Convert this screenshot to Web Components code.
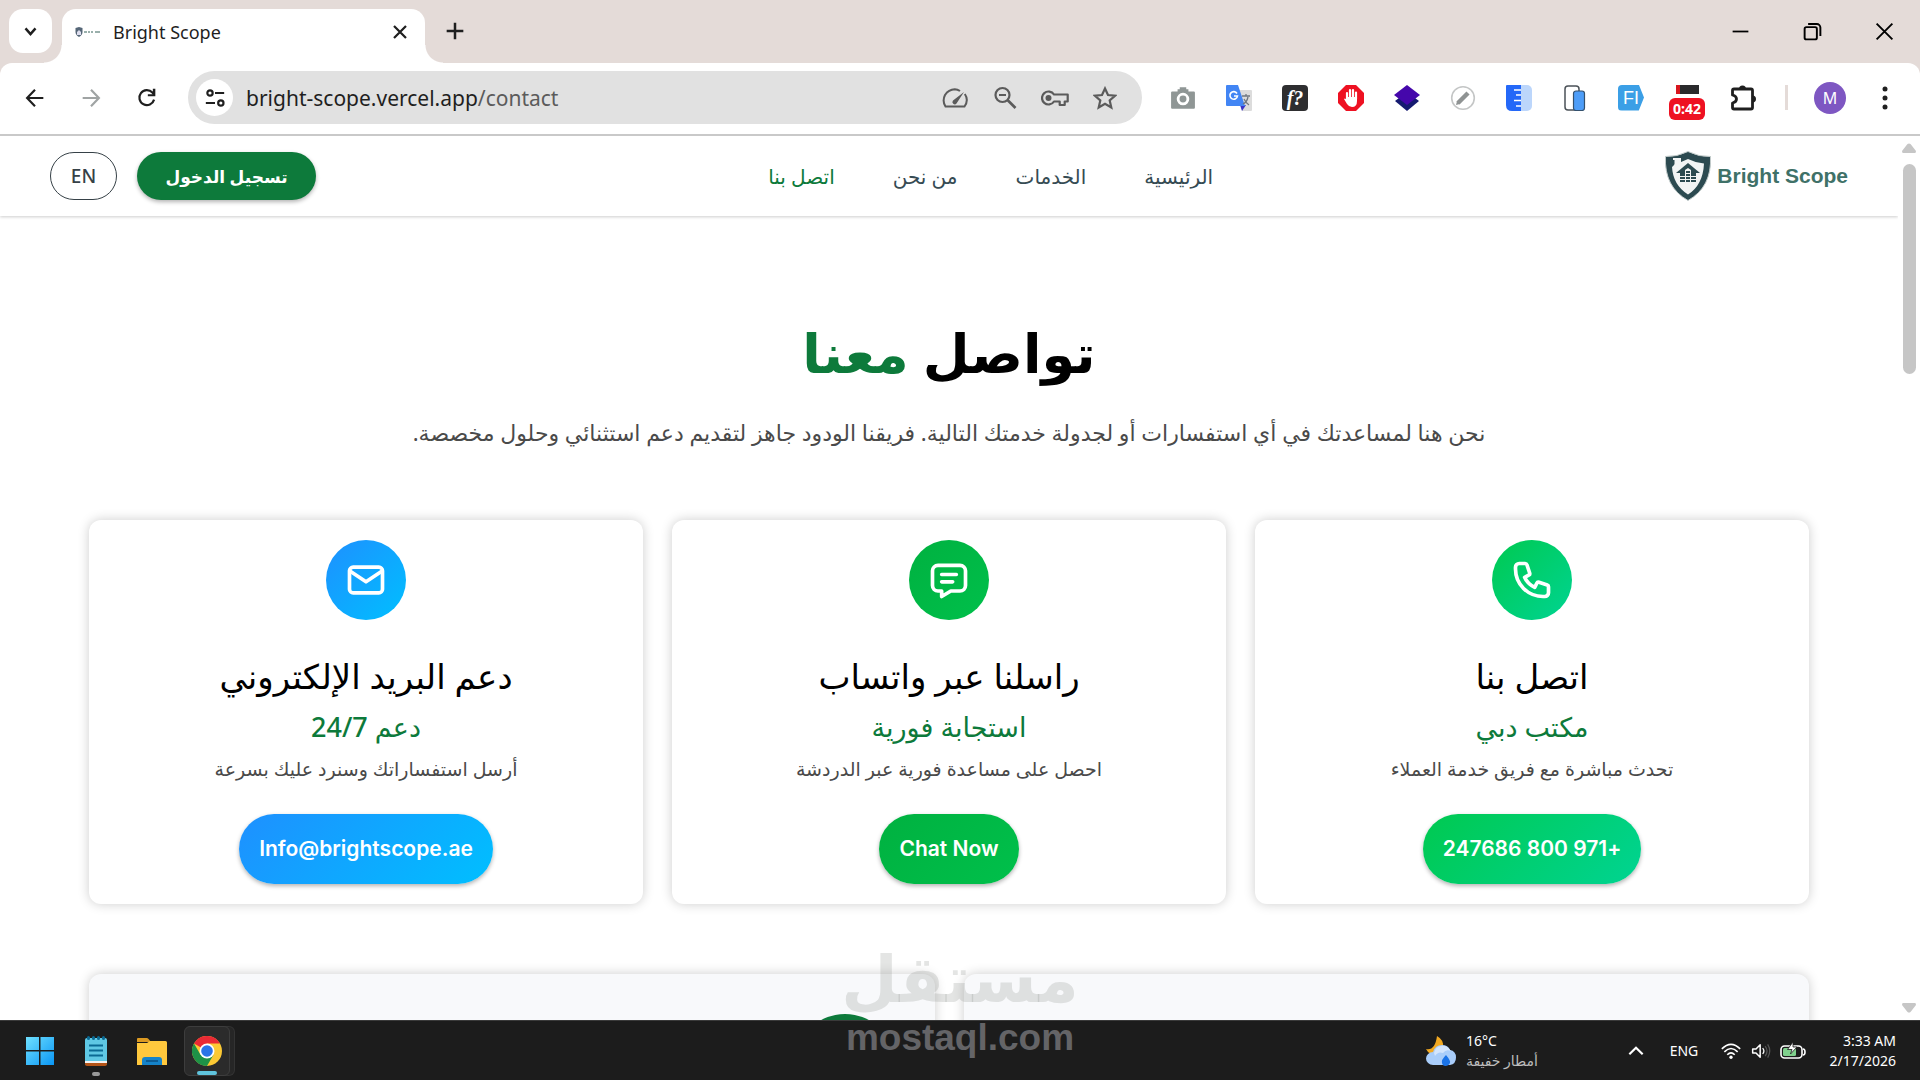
<!DOCTYPE html>
<html lang="ar">
<head>
<meta charset="utf-8">
<title>Bright Scope</title>
<style>
    html, body { height: 100%; margin: 0; }
    body {
        display: flex;
        flex-direction: column;
        overflow: hidden;
        background: #fff;
        font-family: "Noto Sans", "DejaVu Sans", sans-serif;
    }
</style>
</head>
<body>
    <tab-strip title="Bright Scope"></tab-strip>
    <browser-toolbar host="bright-scope.vercel.app" path="/contact"></browser-toolbar>
    <page-view>
        <site-header></site-header>
        <contact-hero>
            <span slot="title">تواصل</span>
            <span slot="accent">معنا</span>
            نحن هنا لمساعدتك في أي استفسارات أو لجدولة خدمتك التالية. فريقنا الودود جاهز لتقديم دعم استثنائي وحلول مخصصة.
        </contact-hero>
        <card-grid>
            <contact-card icon="phone" href="tel:+971800247686" style="--from: #00c950; --to: #00d492">
                <span slot="title">اتصل بنا</span>
                <span slot="subtitle">مكتب دبي</span>
                <span slot="text">تحدث مباشرة مع فريق خدمة العملاء</span>
                +971 800 247686
            </contact-card>
            <contact-card icon="chat" href="#chat" style="--from: #00b140; --to: #00c04b">
                <span slot="title">راسلنا عبر واتساب</span>
                <span slot="subtitle">استجابة فورية</span>
                <span slot="text">احصل على مساعدة فورية عبر الدردشة</span>
                Chat Now
            </contact-card>
            <contact-card icon="mail" href="mailto:Info@brightscope.ae" style="--from: #1e90ff; --to: #00bfff">
                <span slot="title">دعم البريد الإلكتروني</span>
                <span slot="subtitle">دعم 24/7</span>
                <span slot="text">أرسل استفساراتك وسنرد عليك بسرعة</span>
                Info@brightscope.ae
            </contact-card>
        </card-grid>
        <info-panels></info-panels>
    </page-view>
    <task-bar></task-bar>
    <water-mark></water-mark>

<script>
    // Every icon as [viewBox, markup]
    const ICONS = {
        chevronDown: ['0 0 24 24', '<path d="M4 7l8 9 8-9" fill="none" stroke="currentColor" stroke-width="4"/>'],
        favicon: ['0 0 26 12', '<path d="M4 1l3.500 1v4q0 3-3.500 5Q.5 9 .5 6V2z" fill="#567"/><path d="M2 6l2-2 2 2v3H2z" fill="#dde"/><path d="M9 6h3M13 6h2M16 6h2M20 6h5" stroke="#9ab0ac" stroke-width="2"/>'],
        cross: ['0 0 24 24', '<path d="M4 4l16 16M20 4L4 20" fill="none" stroke="currentColor" stroke-width="3"/>'],
        crossThin: ['0 0 24 24', '<path d="M3 3l18 18M21 3L3 21" fill="none" stroke="currentColor" stroke-width="2.200"/>'],
        plus: ['0 0 24 24', '<path d="M12 2v20M2 12h20" fill="none" stroke="currentColor" stroke-width="3"/>'],
        minimize: ['0 0 24 24', '<path d="M3 12h18" stroke="currentColor" stroke-width="2"/>'],
        restore: ['0 0 24 24', '<g fill="none" stroke="currentColor" stroke-width="2.200"><rect x="3" y="7" width="14" height="14" rx="2"/><path d="M7 3.500h10a4 4 0 0 1 4 4V17"/></g>'],
        back: ['0 0 24 24', '<path d="M22 12H3M12 2L2.500 12l9.500 10" fill="none" stroke="currentColor" stroke-width="2.600"/>'],
        forward: ['0 0 24 24', '<path d="M2 12h19M12 2l9.500 10-9.500 10" fill="none" stroke="currentColor" stroke-width="2.600"/>'],
        reload: ['0 0 24 24', '<path d="M20.500 14A9 9 0 1 1 18.500 5.500l2 2.500" fill="none" stroke="currentColor" stroke-width="2.600"/><path d="M22 1v9h-9V7.500h6V1z" fill="currentColor"/>'],
        tune: ['0 0 24 24', '<g fill="none" stroke="currentColor" stroke-width="2.600"><circle cx="6" cy="6" r="3.200"/><path d="M12 6h11M1 18h11"/><circle cx="19" cy="18" r="3.200"/></g>'],
        speed: ['0 0 26 20', '<path d="M18 3Q15.500 1.300 12.800 1.300 6.500 1.500 3 7 0 13 3.500 18.500h19Q27 12 22.800 6" fill="none" stroke="currentColor" stroke-width="2"/><path d="M22 4L11 12.500a2.300 2.300 0 0 0 3.500 3z" fill="currentColor"/>'],
        zoomOut: ['0 0 24 24', '<g fill="none" stroke="currentColor"><circle cx="9.500" cy="9" r="7" stroke-width="2.200"/><path d="M6 9h7" stroke-width="2"/><path d="M14.500 14l8 8" stroke-width="2.600"/></g>'],
        key: ['0 0 28 18', '<path d="M13 5.500h13.700v7h-3V16h-5v-3.500H13A6.500 6.500 0 1 1 13 5.500z" fill="none" stroke="currentColor" stroke-width="2.200" stroke-linejoin="round"/><circle cx="7.500" cy="9" r="3" fill="currentColor"/>'],
        star: ['0 0 24 24', '<path d="M12 2.500l3 6.500 7 .7-5.300 4.700 1.600 7.100L12 17.700l-6.300 3.800 1.600-7.100L2 9.700 9 9z" fill="none" stroke="currentColor" stroke-width="2.200"/>'],
        camera: ['0 0 24 24', '<path d="M2 6h5V4h2V2h6v2h2v2h5q1 0 1 1v14q0 1-1 1H2q-1 0-1-1V7q0-1 1-1z" fill="#8f9695"/><circle cx="12" cy="13" r="4.500" fill="none" stroke="#fff" stroke-width="2.600"/>'],
        translate: ['0 0 26 26', '<path d="M11 5h14q1 0 1 1v19q0 1-1 1h-9z" fill="#dcdcdc"/><path d="M14 20l6 0-4 6z" fill="#3a36c8"/><path d="M1 0h11l7 21H1q-1 0-1-1V1q0-1 1-1z" fill="#4285f4"/><path d="M11 8.500A3.800 3.800 0 1 0 11.500 11H8" fill="none" stroke="#fff" stroke-width="1.600"/><path d="M16 11h8M20 9v2M22 12q-1 5-5 7M18 14q2 4 5 6" fill="none" stroke="#6f7780" stroke-width="1.300"/>'],
        ruler: ['0 0 26 26', '<rect x="8" width="18" height="26" rx="5" fill="#bcd6fb"/><path d="M1 0h14v26H6q-6 0-6-6V1q0-1 1-1z" fill="#2468f8"/><path d="M8 5h7M10 10h5M8 15.500h7M10 21h5" stroke="#fff" stroke-width="1.600"/>'],
        hand: ['0 0 26 26', '<path d="M8 0h10l8 8v10l-8 8H8l-8-8V8z" fill="#ee1122"/><path d="M9 15V8M12 13V5M15 13V5M18 14V7.500" stroke="#fff" stroke-width="2.200" stroke-linecap="round"/><path d="M8 12h11v4q0 6-5 6-3 0-5-3l-3-5q1-1.500 3 1z" fill="#fff"/>'],
        stack: ['0 0 26 26', '<path d="M1 16l12-9 12 9-12 10z" fill="#151a70"/><path d="M13 0l13 10-13 10L0 10z" fill="#4507ab"/>'],
        pencilRound: ['0 0 26 26', '<circle cx="13" cy="13" r="11.300" fill="#fff" stroke="#c4c6c6" stroke-width="1.600"/><path d="M8 18l10-10" stroke="#8f9393" stroke-width="4.500"/><path d="M7 16l3 3-4 1z" fill="#8f9393"/>'],
        devices: ['0 0 26 26', '<rect x="3" y="1" width="14" height="24" rx="3" fill="#fff" stroke="#4b5258" stroke-width="1.500"/><rect x="11.500" y="6" width="11" height="19.500" rx="2.500" fill="#4d9df8" stroke="#34516e" stroke-width="1.200"/>'],
        puzzle: ['0 0 26 26', '<path d="M2.500 5.500Q2.500 4 4 4h17q1.500 0 1.500 1.500v17q0 1.500-1.500 1.500H4q-1.500 0-1.500-1.500V18q4-1 4-4t-4-4z" fill="none" stroke="currentColor" stroke-width="2.800" stroke-linejoin="round"/><path d="M9 4a3.500 3.500 0 0 1 7 0zM22.500 10.500a3.500 3.500 0 0 1 0 7z" fill="currentColor"/>'],
        dots: ['0 0 24 24', '<g fill="currentColor"><circle cx="12" cy="3" r="2.500"/><circle cx="12" cy="12" r="2.500"/><circle cx="12" cy="21" r="2.500"/></g>'],
        shield: ['0 0 46 50', '<path d="M23 .5Q34 6 45.500 5.500 47 36 23 49.500-1 36 .5 5.500 12 6 23 .5z" fill="#2c4a50" stroke="#c3cccb"/><path d="M23 8Q31 12 39 12.500 38 34 23 43.500 8 34 7 16L10 13V7h6v4z" fill="#f2f4f4"/><path d="M8 7h8v2h-1.500v5h-5V9H8z" fill="#f2f4f4"/><path d="M23 12l12 10H11z" fill="#2c4a50"/><path d="M15 22h16v9H15z" fill="#2c4a50"/><path d="M20 22v-3l3-2 3 2v12h-6z" fill="#f2f4f4"/><path d="M21 20h4v2h-4zM21 23h4v2h-4zM21 26h4v5h-4z" fill="#2c4a50"/><path d="M14 25.500h17M14 28.500h17" stroke="#f2f4f4"/>'],
        phone: ['0 0 24 24', '<path d="M3 5a2 2 0 0 1 2-2h3.280a1 1 0 0 1 .948.684l1.498 4.493a1 1 0 0 1-.502 1.210l-2.257 1.130a11.042 11.042 0 0 0 5.516 5.516l1.130-2.257a1 1 0 0 1 1.210-.502l4.493 1.498a1 1 0 0 1 .684.949V19a2 2 0 0 1-2 2h-1C9.716 21 3 14.284 3 6V5z" fill="none" stroke="currentColor" stroke-width="2" stroke-linejoin="round"/>'],
        chat: ['0 0 24 24', '<path d="M8 9h8M8 13h6" fill="none" stroke="currentColor" stroke-width="2" stroke-linecap="round"/><path d="M18 4a3 3 0 0 1 3 3v8a3 3 0 0 1-3 3h-5l-5 3v-3H6a3 3 0 0 1-3-3V7a3 3 0 0 1 3-3z" fill="none" stroke="currentColor" stroke-width="2" stroke-linejoin="round"/>'],
        mail: ['0 0 24 24', '<g fill="none" stroke="currentColor" stroke-width="2" stroke-linejoin="round"><rect x="3" y="5" width="18" height="14" rx="2"/><path d="M3 7l9 6 9-6"/></g>'],
        arrowUp: ['0 0 14 10', '<path d="M5.500 1q1.500-1 3 0L14 8q0 2-1 2H1Q0 10 0 8z" fill="#c6c6c6"/>'],
        arrowDown: ['0 0 14 10', '<path d="M5.500 9q1.500 1 3 0L14 2q0-2-1-2H1Q0 0 0 2z" fill="#c6c6c6"/>'],
        windows: ['0 0 30 30', '<defs><linearGradient id="w" x2="1" y2="1"><stop stop-color="#6fe0ff"/><stop offset="1" stop-color="#0a96f5"/></linearGradient></defs><path d="M1 1h13v13H1zM15.500 1H29v13H15.500zM1 15.500h13V29H1zM15.500 15.500H29V29H15.500z" fill="url(#w)"/>'],
        notepad: ['0 0 30 30', '<rect x="4" y="2" width="22" height="27" rx="2" fill="#5fc8e4"/><path d="M4 25h22v2H4z" fill="#f2f2f2"/><path d="M4 27h22v1q0 2-2 2H6q-2 0-2-2z" fill="#b35418"/><path d="M8 9.500h14M8 14.500h14M8 19.500h14" stroke="#0b6a94" stroke-width="2"/><path d="M7.500 1.500v1M12.500 1.500v1M17.500 1.500v1M22.500 1.500v1" stroke="#0b6a94" stroke-width="3" stroke-linecap="round"/>'],
        folder: ['0 0 30 30', '<path d="M1 2h9q1 0 2 1.500L14 6H0V3q0-1 1-1z" fill="#dc9a22"/><path d="M0 7h10l3-2h15.500Q30 5 30 6.500V29H0z" fill="#ffc83d"/><path d="M5 29v-5q0-3 3-3h14q3 0 3 3v5z" fill="#1583c9"/><path d="M9 25h12" stroke="#0a4f83" stroke-width="1.500"/>'],
        chrome: ['0 0 30 30', '<circle cx="15" cy="15" r="15" fill="#fcc934"/><path d="M15 15L2 7.500A15 15 0 0 1 28 7.500H15z" fill="#ea2a35"/><path d="M2 7.500A15 15 0 0 0 15 30l6.500-11.200L15 15 8.500 18.700z" fill="#1e9247"/><circle cx="15" cy="15" r="7.500" fill="#fff"/><circle cx="15" cy="15" r="5.800" fill="#2b74e8"/>'],
        weather: ['0 0 30 30', '<path d="M11 0q7 4 6 11t-7 8Q3 19 0 13q9 2 11-13z" fill="#f2a922"/><path d="M7 29a7 6.500 0 0 1 0-13Q9 9 16 9q6 0 8 5 6 1 6 7.500T24 29z" fill="#a9cdfa"/><path d="M9 20q3-5 8-3 3-4 8-2-4-6-10-5-6 1-7 7z" fill="#d3e5fd"/><path d="M20 19q5 6 4 8-1.500 3-4.500 3T16 27q-1-3 4-8z" fill="#1a73e8"/>'],
        chevronUp: ['0 0 24 24', '<path d="M4 16l8-8 8 8" fill="none" stroke="currentColor" stroke-width="2.600"/>'],
        wifi: ['0 0 24 24', '<g fill="none" stroke="currentColor" stroke-width="1.900"><path d="M1 9.500q11-11 22 0M4 13q8-8 16 0M7.500 16.500q4.500-4.500 9 0"/></g><circle cx="12" cy="19.500" r="2" fill="currentColor"/>'],
        sound: ['0 0 24 24', '<path d="M2 9.500h4l5-5v15l-5-5H2z" fill="none" stroke="currentColor" stroke-width="1.800" stroke-linejoin="round"/><path d="M14 8.500q3 3.500 0 7" fill="none" stroke="currentColor" stroke-width="1.500"/><path d="M17 6q4.500 6 0 12M20 4q5 8 0 16" fill="none" stroke="#555" stroke-width="1.500"/>'],
        battery: ['0 0 26 18', '<rect x="1" y="4" width="21" height="12" rx="3.500" fill="#1c1c1c" stroke="currentColor" stroke-width="1.600"/><rect x="3" y="6" width="13" height="8" rx="1.500" fill="#7fd08c"/><path d="M23 7q2 0 2 3t-2 3" fill="none" stroke="currentColor" stroke-width="1.600"/><path d="M13 0L7.500 7.500H12L10.500 12 17 5h-4z" fill="#fff" stroke="#1c1c1c" stroke-width=".8"/>']
    };

    class BaseElement extends HTMLElement {
        constructor() {
            super();
            this.attachShadow({mode: 'open'});
        }

        connectedCallback() {
            const template = document.createElement('template');
            template.innerHTML = `<style>:host, * { box-sizing: border-box; } button { padding: 0; border: 0; background: none; color: inherit; font: inherit; } a { text-decoration: none; }</style>${this.view}`;
            this.shadowRoot.replaceChildren(template.content.cloneNode(true));
        }
    }

    class UiIcon extends BaseElement {
        get view() {
            const [box, markup] = ICONS[this.getAttribute('name')];
            return `<style>
                        :host { display: block; flex: none; width: 24px; height: 24px; }
                        svg { display: block; width: 100%; height: 100%; }
                    </style>
                    <svg viewBox="${box}" aria-hidden="true">${markup}</svg>`;
        }
    }

    class TabStrip extends BaseElement {
        get view() {
            return `<style>
                        :host {
                            display: flex;
                            flex: none;
                            height: 63px;
                            padding: 9px 0 0 9px;
                            background: #e4dbd8;
                            color: #1f1f1f;
                            font-size: 18px;
                        }
                        button { display: grid; place-items: center; }
                        .search { width: 43px; height: 44px; border-radius: 14px; background: #fff; }
                        .search ui-icon { width: 15px; height: 15px; }
                        .tab {
                            position: relative;
                            display: flex;
                            align-items: center;
                            width: 363px;
                            height: 54px;
                            margin-left: 10px;
                            padding: 0 16px 8px 13px;
                            border-radius: 14px 14px 0 0;
                            background: #fff;
                        }
                        /* flared feet of the active tab */
                        .tab::before, .tab::after { content: ""; position: absolute; bottom: 0; width: 18px; height: 18px; }
                        .tab::before { right: 100%; background: radial-gradient(circle at 0 0, transparent 17px, #fff 18px); }
                        .tab::after { left: 100%; background: radial-gradient(circle at 100% 0, transparent 17px, #fff 18px); }
                        .tab span { flex: 1; margin-left: 12px; }
                        .fav { width: 26px; height: 12px; }
                        .tab button ui-icon { width: 18px; height: 18px; }
                        .new { width: 60px; height: 44px; }
                        .new ui-icon { width: 20px; height: 20px; }
                        .controls { display: flex; margin: -9px 0 0 auto; color: #000; }
                        .controls button { width: 72px; height: 62px; }
                        .controls ui-icon { width: 21px; height: 21px; }
                    </style>
                    <button class="search" aria-label="Search tabs"><ui-icon name="chevronDown"></ui-icon></button>
                    <div class="tab">
                        <ui-icon class="fav" name="favicon"></ui-icon>
                        <span>${this.getAttribute('title')}</span>
                        <button aria-label="Close tab"><ui-icon name="cross"></ui-icon></button>
                    </div>
                    <button class="new" aria-label="New tab"><ui-icon name="plus"></ui-icon></button>
                    <div class="controls">
                        <button aria-label="Minimize"><ui-icon name="minimize"></ui-icon></button>
                        <button aria-label="Restore"><ui-icon name="restore"></ui-icon></button>
                        <button aria-label="Close"><ui-icon name="crossThin"></ui-icon></button>
                    </div>`;
        }
    }

    class BrowserToolbar extends BaseElement {
        get view() {
            const ext = name => `<button aria-label="${name}"><ui-icon name="${name}"></ui-icon></button>`;
            return `<style>
                        :host { display: block; flex: none; background: #e4dbd8; color: #1f1f1f; font-size: 21px; }
                        .bar {
                            display: flex;
                            align-items: center;
                            height: 73px;
                            padding: 0 17px 2px 7px;
                            border-bottom: 2px solid #c9c9c9;
                            border-radius: 12px 12px 0 0;
                            background: #fff;
                        }
                        button { display: grid; place-items: center; flex: none; width: 56px; height: 48px; }
                        .nav ui-icon { width: 20px; height: 20px; }
                        .nav, .ext { display: flex; flex: none; }
                        .off { color: #a0a4a4; }
                        .omnibox {
                            display: flex;
                            flex: 1;
                            align-items: center;
                            min-width: 0;
                            height: 53px;
                            margin: 0 13px;
                            padding: 0 12px 0 8px;
                            border-radius: 27px;
                            background: #e1e1e1;
                            color: #5b5b5b;
                        }
                        .omnibox button { width: 50px; }
                        .omnibox .tune { width: 37px; height: 37px; border-radius: 50%; background: #fff; color: #1f1f1f; }
                        .tune ui-icon { width: 20px; height: 20px; }
                        label { display: flex; flex: 1; align-items: center; margin-left: 13px; }
                        input { field-sizing: content; padding: 0; border: 0; outline: 0; background: none; color: #1f1f1f; font: inherit; }
                        .wide { width: 28px; height: 20px; }
                        .ext ui-icon { width: 26px; height: 26px; }
                        .fx, .fi {
                            display: grid;
                            place-items: center;
                            width: 26px;
                            height: 26px;
                            border-radius: 4px;
                            background: #2e2e30;
                            color: #fff;
                            font: italic bold 20px/26px "Liberation Serif", serif;
                        }
                        .fi { background: #3b9fe6; clip-path: polygon(0 0, 80% 0, 100% 50%, 80% 100%, 0 100%); font: 18px/26px "Liberation Sans", sans-serif; }
                        .rec { align-content: center; gap: 4px; padding-top: 10px; }
                        .rec i { width: 23px; height: 9px; border-left: 4px solid #d8161e; background: #2a2a2c; }
                        .rec b { padding: 0 4px; border-radius: 6px; background: #ee1122; color: #fff; font-size: 14px; line-height: 22px; }
                        .sep { width: 3px; height: 25px; margin: 0 26px 0 14px; background: #e4dbd8; }
                        .avatar { width: 32px; height: 32px; border-radius: 50%; background: #7e57c2; color: #fff; font-size: 16px; }
                        .more { width: 36px; margin-left: 21px; }
                    </style>
                    <div class="bar">
                        <div class="nav">
                            <button aria-label="Back"><ui-icon name="back"></ui-icon></button>
                            <button class="off" aria-label="Forward"><ui-icon name="forward"></ui-icon></button>
                            <button aria-label="Reload"><ui-icon name="reload"></ui-icon></button>
                        </div>
                        <div class="omnibox">
                            <button class="tune" aria-label="Site information"><ui-icon name="tune"></ui-icon></button>
                            <label><input aria-label="Address" value="${this.getAttribute('host')}"><span>${this.getAttribute('path')}</span></label>
                            <button aria-label="Performance"><ui-icon class="wide" name="speed"></ui-icon></button>
                            <button aria-label="Zoom"><ui-icon name="zoomOut"></ui-icon></button>
                            <button aria-label="Passwords"><ui-icon class="wide" name="key"></ui-icon></button>
                            <button aria-label="Bookmark"><ui-icon name="star"></ui-icon></button>
                        </div>
                        <div class="ext">
                            ${ext('camera')}${ext('translate')}
                            <button aria-label="Fonts"><span class="fx">f?</span></button>
                            ${ext('hand')}${ext('stack')}${ext('pencilRound')}${ext('ruler')}${ext('devices')}
                            <button aria-label="Form filler"><span class="fi">FI</span></button>
                            <button class="rec" aria-label="Recorder"><i></i><b>0:42</b></button>
                            ${ext('puzzle')}
                        </div>
                        <span class="sep"></span>
                        <button class="avatar" aria-label="Profile">M</button>
                        <button class="more" aria-label="Menu"><ui-icon name="dots"></ui-icon></button>
                    </div>`;
        }
    }

    // Scrolling area of the browser: page on the left, scrollbar on the right
    class PageView extends BaseElement {
        get view() {
            return `<style>
                        :host { display: flex; flex: 1; min-height: 0; overflow: hidden; }
                        main { flex: 1; min-width: 0; overflow: hidden; direction: rtl; }
                        .scroll { display: flex; flex-direction: column; align-items: center; width: 22px; padding: 7px 0; }
                        ui-icon { width: 14px; height: 10px; }
                        .track { flex: 1; padding-top: 11px; }
                        .thumb { width: 13px; height: 25%; min-height: 40px; border-radius: 7px; background: #c6c6c6; }
                    </style>
                    <main><slot></slot></main>
                    <div class="scroll">
                        <ui-icon name="arrowUp"></ui-icon>
                        <div class="track"><div class="thumb"></div></div>
                        <ui-icon name="arrowDown"></ui-icon>
                    </div>`;
        }
    }

    class SiteHeader extends BaseElement {
        get view() {
            return `<style>
                        :host {
                            display: flex;
                            align-items: center;
                            justify-content: space-between;
                            height: 80px;
                            padding: 0 50px;
                            box-shadow: 0 1px 3px rgba(0, 0, 0, .2);
                            font-size: 20px;
                        }
                        .logo { display: flex; align-items: center; gap: 6px; color: #3f7168; font: bold 21px "Liberation Sans", sans-serif; }
                        .logo ui-icon { width: 46px; height: 50px; }
                        nav { display: flex; gap: 58px; }
                        nav a { color: #364b53; font-weight: 500; }
                        nav a[aria-current] { color: #0d7a3b; }
                        .actions { display: flex; gap: 20px; }
                        button { height: 48px; border-radius: 24px; }
                        .login { width: 179px; background: #0d7a3b; color: #fff; font-size: 17px; font-weight: 700; box-shadow: 0 2px 4px rgba(0, 0, 0, .3); }
                        .lang { width: 67px; border: 1px solid #364147; color: #364147; font-size: 19px; font-weight: 500; }
                    </style>
                    <a class="logo" href="/" dir="ltr"><ui-icon name="shield"></ui-icon>Bright Scope</a>
                    <nav>
                        <a href="/">الرئيسية</a>
                        <a href="/services">الخدمات</a>
                        <a href="/about">من نحن</a>
                        <a href="/contact" aria-current="page">اتصل بنا</a>
                    </nav>
                    <div class="actions">
                        <button class="login">تسجيل الدخول</button>
                        <button class="lang">EN</button>
                    </div>`;
        }
    }

    class ContactHero extends BaseElement {
        get view() {
            return `<style>
                        :host { display: block; padding: 88px 40px 0; text-align: center; }
                        h1 { margin: 0; color: #000; font-size: 54px; font-weight: 600; line-height: 96px; }
                        em { color: #0d7a3b; font-style: normal; }
                        p { margin: 12px 0 0; color: #4a4a4a; font-size: 22px; line-height: 40px; }
                    </style>
                    <h1><slot name="title"></slot> <em><slot name="accent"></slot></em></h1>
                    <p><slot></slot></p>`;
        }
    }

    class CardGrid extends BaseElement {
        get view() {
            return `<style>
                        :host { display: grid; grid-template-columns: repeat(3, 1fr); gap: 29px; padding: 68px 89px 0; }
                    </style>
                    <slot></slot>`;
        }
    }

    class ContactCard extends BaseElement {
        get view() {
            return `<style>
                        :host {
                            display: flex;
                            flex-direction: column;
                            align-items: center;
                            padding: 20px;
                            border-radius: 12px;
                            background: #fff;
                            box-shadow: 0 0 12px rgba(0, 0, 0, .2);
                            text-align: center;
                        }
                        .icon { display: grid; place-items: center; width: 80px; height: 80px; border-radius: 50%; color: #fff; }
                        .icon, a { background: linear-gradient(135deg, var(--from), var(--to)); }
                        ui-icon { width: 44px; height: 44px; }
                        h2, h3, p { margin: 0; font-weight: 500; }
                        h2 { margin-top: 30px; color: #000; font-size: 34px; line-height: 52px; }
                        h3 { color: #0d7a3b; font-size: 27px; line-height: 50px; }
                        p { color: #4a4a4a; font-size: 19px; font-weight: 400; line-height: 34px; }
                        a {
                            margin-top: 28px;
                            padding: 0 20px;
                            border-radius: 35px;
                            box-shadow: 0 2px 4px rgba(0, 0, 0, .3);
                            color: #fff;
                            font: 600 21px/70px Inter, sans-serif;
                        }
                    </style>
                    <div class="icon"><ui-icon name="${this.getAttribute('icon')}"></ui-icon></div>
                    <h2><slot name="title"></slot></h2>
                    <h3><slot name="subtitle"></slot></h3>
                    <p><slot name="text"></slot></p>
                    <a href="${this.getAttribute('href')}"><slot></slot></a>`;
        }
    }

    class InfoPanels extends BaseElement {
        get view() {
            return `<style>
                        :host { display: grid; grid-template-columns: 1fr 1fr; gap: 29px; padding: 70px 89px 0; }
                        section { height: 400px; padding: 40px; border-radius: 12px; background: #f8f9fb; box-shadow: 0 0 12px rgba(0, 0, 0, .2); }
                        i { display: block; width: 100px; height: 100px; border-radius: 50%; background: #0d7a3b; }
                    </style>
                    <section></section>
                    <section><i></i></section>`;
        }
    }

    class TaskBar extends BaseElement {
        get view() {
            return `<style>
                        :host {
                            display: flex;
                            flex: none;
                            align-items: center;
                            height: 60px;
                            padding: 0 24px 0 12px;
                            border-top: 1px solid #3a3a3a;
                            background: #1c1c1c;
                            color: #fff;
                            font-size: 14px;
                            line-height: 20px;
                        }
                        button { display: grid; place-items: center; position: relative; width: 56px; height: 50px; }
                        button ui-icon { width: 30px; height: 30px; }
                        /* running indicator */
                        .run::after { content: ""; position: absolute; bottom: 0; width: 8px; height: 4px; border-radius: 2px; background: #999; }
                        .active { width: 46px; margin-left: 4px; border: 1px solid #3d3d3d; border-radius: 6px; background: #2b2b2b; box-shadow: 5px 0 0 -1px #262626, 5px 0 #333; }
                        .active::after { width: 20px; background: #5fc3dc; }
                        .weather { display: flex; align-items: center; gap: 10px; margin-left: auto; }
                        .weather ui-icon { width: 30px; height: 30px; }
                        .weather span { display: block; }
                        .weather .sky { color: #bdbdbd; }
                        .tray { display: flex; align-items: center; margin-left: 70px; }
                        .tray button { width: 30px; }
                        .tray .up { width: 56px; }
                        .tray .lang { width: 40px; margin-right: 12px; }
                        .tray ui-icon { width: 20px; height: 20px; }
                        .tray .bat { width: 34px; }
                        .tray .bat ui-icon { width: 26px; }
                        time { width: 86px; text-align: right; }
                    </style>
                    <button aria-label="Start"><ui-icon name="windows"></ui-icon></button>
                    <button class="run" aria-label="Notepad"><ui-icon name="notepad"></ui-icon></button>
                    <button aria-label="Files"><ui-icon name="folder"></ui-icon></button>
                    <button class="run active" aria-label="Chrome"><ui-icon name="chrome"></ui-icon></button>
                    <div class="weather">
                        <ui-icon name="weather"></ui-icon>
                        <div><span>16°C</span><span class="sky">أمطار خفيفة</span></div>
                    </div>
                    <div class="tray">
                        <button class="up" aria-label="Hidden icons"><ui-icon name="chevronUp"></ui-icon></button>
                        <button class="lang">ENG</button>
                        <button aria-label="Network"><ui-icon name="wifi"></ui-icon></button>
                        <button aria-label="Volume"><ui-icon name="sound"></ui-icon></button>
                        <button class="bat" aria-label="Battery"><ui-icon name="battery"></ui-icon></button>
                        <time>3:33 AM<br>2/17/2026</time>
                    </div>`;
        }
    }

    // Stamp laid over the bottom of the window
    class WaterMark extends BaseElement {
        get view() {
            return `<style>
                        :host {
                            position: absolute;
                            right: 0;
                            bottom: 20px;
                            left: 0;
                            display: flex;
                            flex-direction: column;
                            align-items: center;
                            pointer-events: none;
                            font-weight: 700;
                            text-align: center;
                        }
                        .ar { color: rgba(120, 125, 122, .2); font-size: 65px; line-height: 78px; }
                        .en { color: #646467; font: bold 37px/44px "Liberation Sans", sans-serif; }
                    </style>
                    <span class="ar">مستقل</span>
                    <span class="en">mostaql.com</span>`;
        }
    }

    customElements.define('ui-icon', UiIcon);
    customElements.define('tab-strip', TabStrip);
    customElements.define('browser-toolbar', BrowserToolbar);
    customElements.define('page-view', PageView);
    customElements.define('site-header', SiteHeader);
    customElements.define('contact-hero', ContactHero);
    customElements.define('card-grid', CardGrid);
    customElements.define('contact-card', ContactCard);
    customElements.define('info-panels', InfoPanels);
    customElements.define('task-bar', TaskBar);
    customElements.define('water-mark', WaterMark);
</script>
</body>
</html>
